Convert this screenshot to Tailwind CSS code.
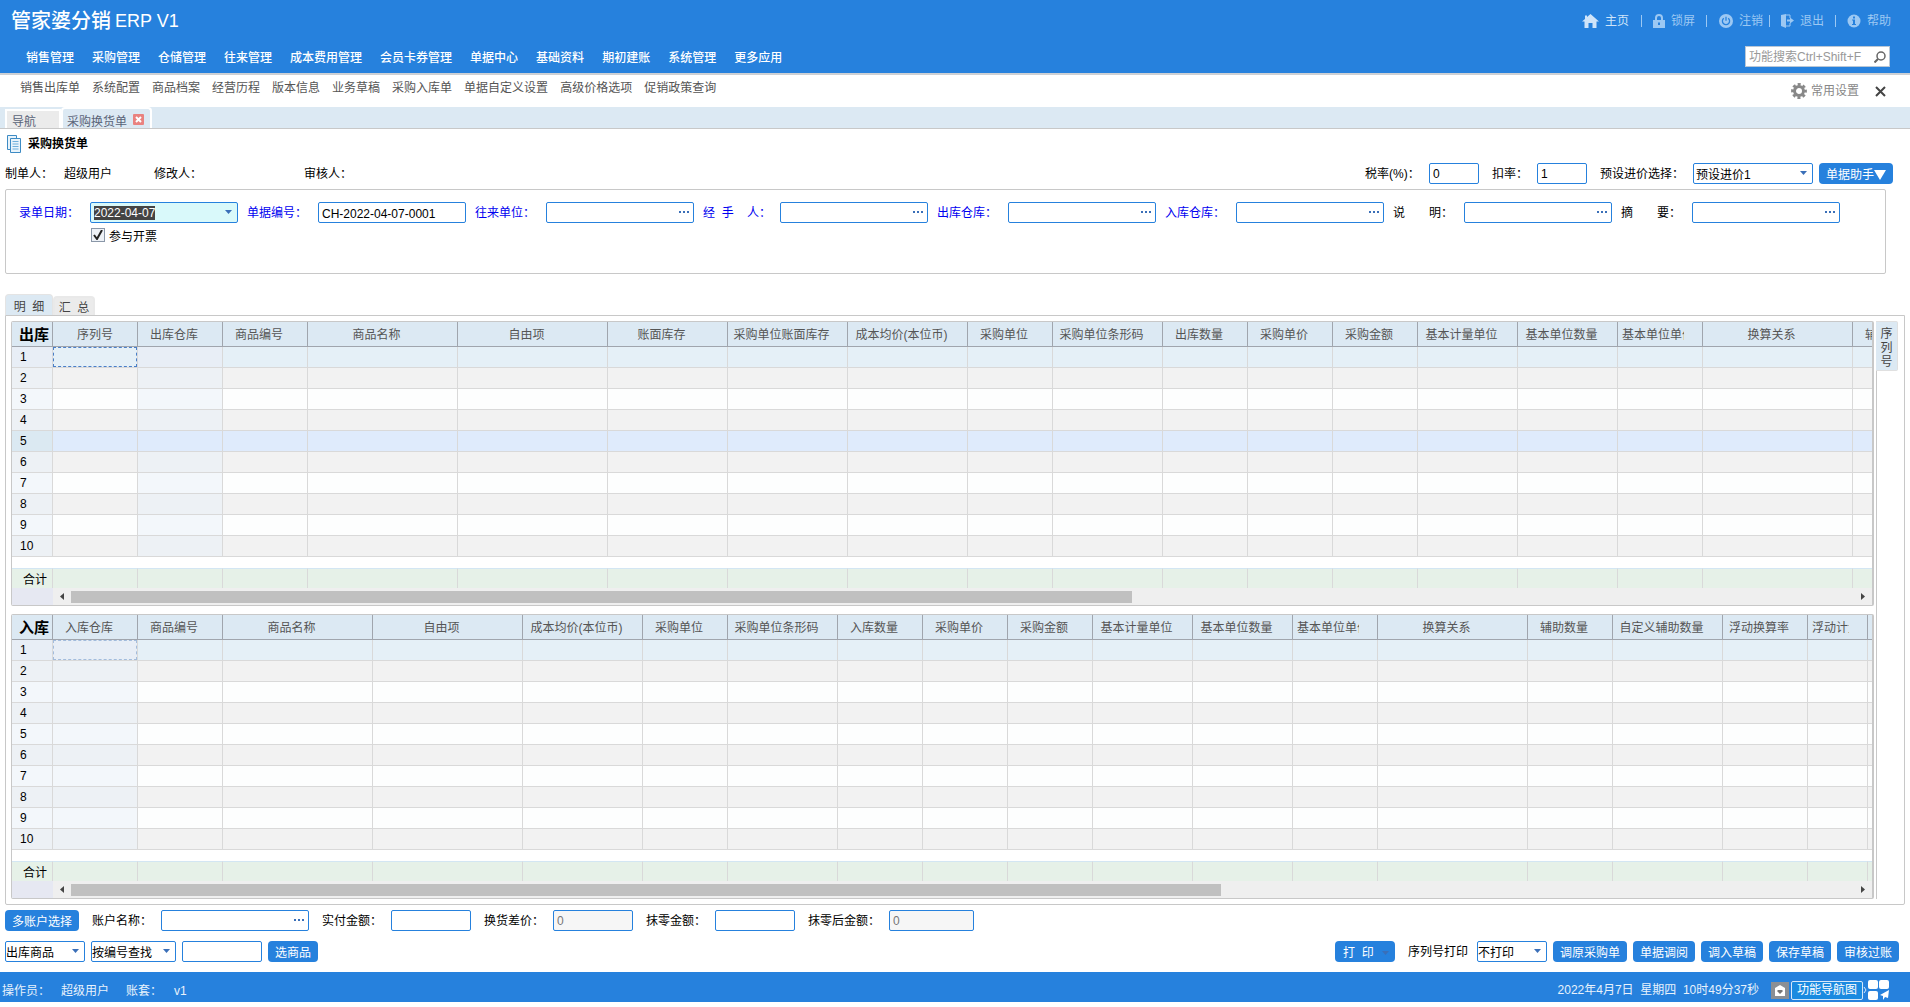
<!DOCTYPE html>
<html lang="zh-CN">
  <head>
    <meta charset="UTF-8" />
    <meta name="viewport" content="width=device-width, initial-scale=1.0" />
    <script src="https://cdn.jsdelivr.net/npm/@tailwindcss/browser@4"></script>
    <title>管家婆分销 ERP V1</title>
  </head>

  <body class="bg-white text-xs text-black font-['Liberation_Sans','Noto_Sans_CJK_SC',sans-serif]">
    <header class="bg-[#2681dd] text-white">
      <div class="flex h-10 items-center justify-between pl-[11px] pr-[19px] pt-0.5">
        <h1 class="flex items-center gap-1 text-lg"><span class="text-xl font-medium">管家婆分销</span>ERP V1</h1>
        <nav class="flex items-center text-[#9cc8f3]">
          <a href="#" class="flex items-center gap-1.5 pr-3 text-[#cfe4f9]">
            <svg class="h-[14px] w-[17px]" viewBox="0 0 17 14" fill="currentColor"><path d="M8.500 0 17 7.500H14.500V14H10.500V9H6.500V14H2.500V7.500H0L3 4.900V1.500H5V3.100z" /></svg>
            主页
          </a>
          <i class="h-3 w-px bg-[#9cc8f3]"></i>
          <a href="#" class="flex items-center gap-1.5 px-[11px]">
            <svg class="h-[14px] w-3" viewBox="0 0 12 14" fill="currentColor"><path fill-rule="evenodd" d="M2 6V4a4 4 0 0 1 8 0v2h2v8H0V6zM4 6h4V4a2 2 0 0 0-4 0zM5 8.500v2.500h2V8.500z" /></svg>
            锁屏
          </a>
          <i class="h-3 w-px bg-[#9cc8f3]"></i>
          <a href="#" class="flex items-center gap-1.5 pl-3 pr-1.5">
            <svg class="h-[14px] w-[14px]" viewBox="0 0 14 14"><circle cx="7" cy="7" r="7" fill="currentColor" /><path d="M4.800 4.200a3.600 3.600 0 1 0 4.400 0M7 2.800v4" fill="none" stroke="#2681dd" stroke-width="1.300" /></svg>
            注销
          </a>
          <i class="h-3 w-px bg-[#9cc8f3]"></i>
          <a href="#" class="flex items-center gap-1.5 px-[11px]">
            <svg class="h-[14px] w-[13px]" viewBox="0 0 13 14" fill="currentColor"><path d="M0 1l5-1v14l-5-2z" /><path d="M5 1h4v3M5 12h4V9" fill="none" stroke="currentColor" /><path d="M6 5.500h3V3.500l4 3-4 3v-2H6z" /></svg>
            退出
          </a>
          <i class="h-3 w-px bg-[#9cc8f3]"></i>
          <a href="#" class="flex items-center gap-1.5 pl-[11px]">
            <svg class="h-[14px] w-[14px]" viewBox="0 0 14 14"><circle cx="7" cy="7" r="6.500" fill="currentColor" /><path d="M6 2.500h2v2H6zM5 5.500h3V10h1v1H5v-1h1V6.500H5z" fill="#2681dd" /></svg>
            帮助
          </a>
        </nav>
      </div>
      <div class="flex h-[33px] items-center justify-between pl-[26px] pr-5">
        <nav id="main-menu" class="flex gap-[18px] pt-0.5 font-medium"></nav>
        <label class="flex h-[21px] w-[145px] items-center border border-[#b9c7d6] bg-white">
          <input type="text" aria-label="功能搜索" placeholder="功能搜索Ctrl+Shift+F" class="w-[120px] min-w-0 pl-[3px] text-xs text-black outline-none placeholder:text-[#999]" />
          <svg class="ml-2 h-3 w-3" viewBox="0 0 12 12" fill="none" stroke="#666"><circle cx="7" cy="5" r="4" stroke-width="1.500" /><path d="M4 8 .5 11.500" stroke-width="2" /></svg>
        </label>
      </div>
    </header>

    <div class="flex h-[34px] justify-between border-t-2 border-[#cdd0d4] pl-5 pr-6 text-[#555]">
      <nav id="quick-menu" class="flex h-[26px] items-center gap-3"></nav>
      <div class="flex items-center text-[#888]">
        <button class="flex items-center gap-1">
          <svg class="h-4 w-4" viewBox="0 0 16 16"><circle cx="8" cy="8" r="4.500" fill="none" stroke="currentColor" stroke-width="3" /><circle cx="8" cy="8" r="6.600" fill="none" stroke="currentColor" stroke-width="2.600" stroke-dasharray="3 2.180" stroke-dashoffset="1.500" /></svg>
          常用设置
        </button>
        <button aria-label="关闭" class="ml-4 text-[#444]">
          <svg class="h-[11px] w-[11px]" viewBox="0 0 11 11" stroke="currentColor" stroke-width="2"><path d="M1 1l9 9M10 1l-9 9" /></svg>
        </button>
      </div>
    </div>

    <div class="flex h-[22px] items-end border-b border-[#c8c8c8] bg-[#dce9f3] pl-[5px] text-[#5a6478]">
      <a href="#" class="h-[19px] w-14 border-2 border-b-0 border-white bg-[#ebebeb] pl-[5px] leading-[22px]">导航</a>
      <a href="#" class="flex h-[21px] w-[91px] items-center gap-1.5 rounded-t border-2 border-b-0 border-white bg-[#dce9f3] pl-1 pt-1.5">
        采购换货单
        <svg class="mb-1 h-[11px] w-[11px]" viewBox="0 0 11 11"><rect width="11" height="11" rx="1" fill="#e9827f" /><path d="M3 3l5 5M8 3l-5 5" stroke="#fff" stroke-width="2" /></svg>
      </a>
    </div>

    <main>
      <h2 class="flex h-7 items-center gap-[7px] pl-[7px] pt-0.5 font-bold">
        <svg class="h-[18px] w-[14px]" viewBox="0 0 14 18" fill="#e9f4fb" stroke="#3d8bc4"><path d="M.5.500h9v14h-9z" /><path d="M3.500 3.500h10v14h-10z" /><path d="M5.500 6.500h6M5.500 9h6M5.500 11.500h6M5.500 14h6" stroke="#6fb0dc" /></svg>
        采购换货单
      </h2>

      <div class="mt-1.5 flex h-[21px] items-center justify-between pl-[5px] pr-[17px]">
        <div class="flex pt-px">
          <span class="w-[59px]">制单人：</span><span class="w-[90px]">超级用户</span>
          <span class="w-[150px]">修改人：</span><span>审核人：</span>
        </div>
        <div class="flex items-center">
          <label for="tax" class="w-16">税率(%)：</label>
          <input id="tax" value="0" class="h-[21px] w-[50px] rounded-xs border border-[#2681dd] px-[3px]" />
          <label for="discount" class="ml-[13px] w-[45px]">扣率：</label>
          <input id="discount" value="1" class="h-[21px] w-[50px] rounded-xs border border-[#2681dd] px-[3px]" />
          <label for="price" class="ml-[13px] w-[93px]">预设进价选择：</label>
          <span class="relative">
            <select id="price" class="block h-[21px] w-[120px] appearance-none rounded-xs border border-[#2681dd] px-0.5 pt-0.5"><option>预设进价1</option></select>
            <svg class="pointer-events-none absolute right-1.5 top-2 h-1 w-[7px]" viewBox="0 0 7 4" fill="#3a6fb8"><path d="M0 0h7L3.500 4z" /></svg>
          </span>
          <button class="ml-1.5 flex h-[21px] w-[74px] items-center justify-center rounded bg-[#2681dd] pt-0.5 text-white">
            单据助手<svg class="h-[10px] w-3" viewBox="0 0 12 10" fill="currentColor"><path d="M0 0h12L6 10z" /></svg>
          </button>
        </div>
      </div>

      <form class="ml-[5px] mr-6 mt-[5px] h-[85px] rounded-xs border border-[#c8c8c8] pl-[13px] pt-3">
        <div id="fields" class="flex items-center gap-[9px] text-[#0000f0]">
          <div class="flex items-center">
            <label for="date" class="w-[71px]">录单日期：</label>
            <span class="relative">
              <input id="date" value="2022-04-07" class="block h-[21px] w-[148px] rounded-xs border border-[#2681dd] bg-[#d9f9fa] px-[3px] text-black outline-none selection:bg-[#444] selection:text-white" />
              <svg class="pointer-events-none absolute right-1.5 top-2 h-1 w-[7px]" viewBox="0 0 7 4" fill="#3a6fb8"><path d="M0 0h7L3.500 4z" /></svg>
            </span>
          </div>
          <div class="flex items-center">
            <label for="code" class="w-[71px]">单据编号：</label>
            <input id="code" value="CH-2022-04-07-0001" class="h-[21px] w-[148px] rounded-xs border border-[#2681dd] px-[3px] pt-0.5 text-black" />
          </div>
        </div>
        <label class="mt-1 flex h-5 items-center gap-1 pl-[72px]">
          <span class="relative mb-1 flex">
            <input type="checkbox" checked class="h-[14px] w-[14px] appearance-none border border-[#8a97a8] bg-[#eef2f7]" />
            <svg class="pointer-events-none absolute left-0.5 top-0.5 h-[10px] w-[10px]" viewBox="0 0 10 10" fill="none" stroke="#222" stroke-width="2"><path d="M1 5l3 4L9 0" /></svg>
          </span>
          参与开票
        </label>
      </form>

      <div class="mt-5 flex h-[21px] items-end pl-[5px] text-[#444]">
        <button class="h-[21px] w-12 whitespace-pre rounded-t border border-b-0 border-[#e4e4e4] bg-[#dce9f3] pt-1">明  细</button>
        <button class="h-[19px] w-[42px] whitespace-pre rounded-t border-2 border-b-0 border-[#e9e9e9] bg-[#ebebeb] pt-0.5">汇  总</button>
      </div>

      <section class="ml-[5px] mr-[5px] flex rounded-b-xs border border-[#c8c8c8] py-[5px] pl-[5px]">
        <div id="grids" class="flex min-w-0 flex-1 flex-col gap-2"></div>
        <aside class="ml-0.5 w-7">
          <button class="flex h-[50px] w-[22px] flex-col items-center justify-center rounded-r-xs border border-l-0 border-[#e0e0e0] bg-[#dce9f3] pt-1 leading-[14px] text-[#444]"><span>序</span><span>列</span><span>号</span></button>
          <div class="h-[528px] border-l border-[#c8c8c8]"></div>
        </aside>
      </section>

      <div class="mt-[5px] flex h-[21px] items-center pl-[5px]">
        <button class="h-[21px] w-[74px] rounded bg-[#2681dd] pt-0.5 text-white">多账户选择</button>
        <label for="account" class="ml-[13px] w-[69px]">账户名称：</label>
        <span class="relative">
          <input id="account" class="block h-[21px] w-[148px] rounded-xs border border-[#2681dd] pl-1 pr-5" />
          <svg class="pointer-events-none absolute right-1 top-[9px] h-0.5 w-[11px]" viewBox="0 0 11 2" fill="#3a6fb8"><path d="M0 0h2v2H0zM4 0h2v2H4zM8 0h2v2H8z" /></svg>
        </span>
        <label for="paid" class="ml-[13px] w-[69px]">实付金额：</label>
        <input id="paid" class="h-[21px] w-20 rounded-xs border border-[#2681dd] px-1" />
        <label for="diff" class="ml-[13px] w-[69px]">换货差价：</label>
        <input id="diff" value="0" readonly class="h-[21px] w-20 rounded-xs border border-[#2681dd] bg-[#f6f6f6] px-[3px] text-[#777]" />
        <label for="round" class="ml-[13px] w-[69px]">抹零金额：</label>
        <input id="round" class="h-[21px] w-20 rounded-xs border border-[#2681dd] px-1" />
        <label for="after" class="ml-[13px] w-[81px]">抹零后金额：</label>
        <input id="after" value="0" readonly class="h-[21px] w-[85px] rounded-xs border border-[#2681dd] bg-[#f6f6f6] px-[3px] text-[#777]" />
      </div>

      <div class="mt-[10px] flex h-[21px] items-center justify-between pl-[5px] pr-[11px]">
        <div class="flex gap-1.5">
          <span class="relative">
            <select aria-label="商品范围" class="block h-[21px] w-20 appearance-none rounded-xs border border-[#2681dd] px-0 pt-0.5"><option>出库商品</option></select>
            <svg class="pointer-events-none absolute right-1.5 top-2 h-1 w-[7px]" viewBox="0 0 7 4" fill="#3a6fb8"><path d="M0 0h7L3.500 4z" /></svg>
          </span>
          <span class="relative">
            <select aria-label="查找方式" class="block h-[21px] w-[85px] appearance-none rounded-xs border border-[#2681dd] px-0 pt-0.5"><option>按编号查找</option></select>
            <svg class="pointer-events-none absolute right-1.5 top-2 h-1 w-[7px]" viewBox="0 0 7 4" fill="#3a6fb8"><path d="M0 0h7L3.500 4z" /></svg>
          </span>
          <input aria-label="查找内容" class="h-[21px] w-20 rounded-xs border border-[#2681dd] px-1" />
          <button class="h-[21px] w-[50px] rounded bg-[#2681dd] pt-0.5 text-white">选商品</button>
        </div>
        <div class="flex items-center gap-1.5">
          <button class="flex h-[21px] w-[60px] items-center gap-2 whitespace-pre rounded bg-[#2681dd] pl-2 pt-0.5 text-white">打  印<svg class="h-1 w-[7px]" viewBox="0 0 7 4" fill="#3a6fb8"><path d="M0 0h7L3.500 4z" /></svg></button>
          <label for="print-sn" class="ml-[7px] mr-[3px] pt-px">序列号打印</label>
          <span class="relative">
            <select id="print-sn" class="block h-[21px] w-[70px] appearance-none rounded-xs border border-[#2681dd] px-0 pt-0.5"><option>不打印</option></select>
            <svg class="pointer-events-none absolute right-1.5 top-2 h-1 w-[7px]" viewBox="0 0 7 4" fill="#3a6fb8"><path d="M0 0h7L3.500 4z" /></svg>
          </span>
          <button class="h-[21px] w-[74px] rounded bg-[#2681dd] pt-0.5 text-white">调原采购单</button>
          <button class="h-[21px] w-[62px] rounded bg-[#2681dd] pt-0.5 text-white">单据调阅</button>
          <button class="h-[21px] w-[62px] rounded bg-[#2681dd] pt-0.5 text-white">调入草稿</button>
          <button class="h-[21px] w-[62px] rounded bg-[#2681dd] pt-0.5 text-white">保存草稿</button>
          <button class="h-[21px] w-[62px] rounded bg-[#2681dd] pt-0.5 text-white">审核过账</button>
        </div>
      </div>
    </main>

    <footer class="mt-[10px] flex h-[30px] items-center justify-between bg-[#2681dd] pl-0.5 pr-[21px] pt-1.5 text-[#e8f2fc]">
      <div class="flex pt-0.5">
        <span class="w-[59px]">操作员：</span><span class="w-[65px]">超级用户</span>
        <span class="w-12">账套：</span><span>v1</span>
      </div>
      <div class="flex items-center">
        <span class="whitespace-pre">2022年4月7日  星期四  10时49分37秒</span>
        <svg class="ml-3 h-[17px] w-[18px]" viewBox="0 0 18 17"><rect width="18" height="17" fill="#8b8f94" /><path d="M4 6l5-3 5 3v8H4z" fill="#fff" /><path d="M9 12L6.500 9.500V8h5v1.500z" fill="#777" /></svg>
        <button class="ml-0.5 h-[19px] w-[72px] rounded-xs border border-[#d5e8fa] bg-[#1a8ae0] text-white">功能导航图</button>
        <svg class="h-5 w-[26px]" viewBox="0 0 26 20" fill="#fff"><path d="M1 7l2 3-2 3" fill="none" stroke="#d5e8fa" /><rect x="5" y="0" width="10" height="9" rx="2" /><rect x="16" y="0" width="10" height="9" rx="2" /><rect x="5" y="11" width="10" height="9" rx="2" /><path d="M26 10l-9 5 3 1v4l2-3 3 1z" /></svg>
      </div>
    </footer>

    <script>
      const mainMenu = ["销售管理", "采购管理", "仓储管理", "往来管理", "成本费用管理", "会员卡券管理", "单据中心", "基础资料", "期初建账", "系统管理", "更多应用"];
      const quickMenu = ["销售出库单", "系统配置", "商品档案", "经营历程", "版本信息", "业务草稿", "采购入库单", "单据自定义设置", "高级价格选项", "促销政策查询"];

      const lookups = [
        { label: "往来单位：", css: "w-[71px]" },
        { label: "经  手    人：", css: "w-[77px]" },
        { label: "出库仓库：", css: "w-[71px]" },
        { label: "入库仓库：", css: "w-[71px]" },
        { label: "说　　明：", css: "w-[71px] text-black" },
        { label: "摘　　要：", css: "w-[71px] text-black" },
      ];

      // [title, width]
      const grids = [
        {
          name: "出库",
          readonlyCol: 1,
          activeRow: 5,
          thumb: 59.5,
          focusCss: "border-[#4a7fc8]",
          cols: [["序列号", 85], ["出库仓库", 85], ["商品编号", 85], ["商品名称", 150], ["自由项", 150], ["账面库存", 120], ["采购单位账面库存", 120], ["成本均价(本位币)", 120], ["采购单位", 85], ["采购单位条形码", 110], ["出库数量", 85], ["采购单价", 85], ["采购金额", 85], ["基本计量单位", 100], ["基本单位数量", 100], ["基本单位单价", 85], ["换算关系", 150], ["辅助数量", 85]],
        },
        {
          name: "入库",
          readonlyCol: 0,
          activeRow: 0,
          thumb: 64.5,
          focusCss: "border-[#a3bcdc]",
          cols: [["入库仓库", 85], ["商品编号", 85], ["商品名称", 150], ["自由项", 150], ["成本均价(本位币)", 120], ["采购单位", 85], ["采购单位条形码", 110], ["入库数量", 85], ["采购单价", 85], ["采购金额", 85], ["基本计量单位", 100], ["基本单位数量", 100], ["基本单位单价", 85], ["换算关系", 150], ["辅助数量", 85], ["自定义辅助数量", 110], ["浮动换算率", 85], ["浮动计量", 60], ["", 85]],
        },
      ];

      const links = (items) => items.map((text) => `<a href="#">${text}</a>`).join("");
      document.getElementById("main-menu").innerHTML = links(mainMenu);
      document.getElementById("quick-menu").innerHTML = links(quickMenu);

      document.getElementById("fields").innerHTML += lookups
        .map((f, i) => `<div class="flex items-center">
            <label for="lookup-${i}" class="whitespace-pre ${f.css}">${f.label}</label>
            <span class="relative">
              <input id="lookup-${i}" class="block h-[21px] w-[148px] rounded-xs border border-[#2681dd] pl-1 pr-5 text-black" />
              <svg class="pointer-events-none absolute right-1 top-[9px] h-0.5 w-[11px]" viewBox="0 0 11 2" fill="#3a6fb8"><path d="M0 0h2v2H0zM4 0h2v2H4zM8 0h2v2H8z" /></svg>
            </span>
          </div>`)
        .join("");

      function rowColors(row, activeRow) {
        if (row === 1) return { line: "bg-[#e5f0f7]", head: "bg-[#e8eef6]", locked: "bg-[#e8eef6]" };
        if (row === activeRow) return { line: "bg-[#dfebfc]", head: "bg-[#dbe9f2]", locked: "bg-[#dfebfc]" };
        if (row % 2) return { line: "bg-[#fdfefe]", head: "bg-[#f3f7fb]", locked: "bg-[#f3f7fb]" };
        return { line: "bg-[#f2f2f2]", head: "bg-[#edf1f5]", locked: "bg-[#edf1f5]" };
      }

      function renderGrid(grid) {
        const total = grid.cols.reduce((sum, c) => sum + c[1], 41);
        const colgroup = grid.cols.map((c) => `<col style="width:${c[1]}px">`).join("");
        const heads = grid.cols
          .map(([title]) => {
            // titles wider than the column are cut off on the right
            const clipped = title === "基本单位单价" || title === "浮动计量";
            const css = clipped ? "mr-[18px] ml-1 text-left" : title === "序列号" ? "" : "mr-3";
            return `<th class="h-[25px] border-b border-r border-[#a0a5ad] p-0 pt-0.5 font-normal"><div class="overflow-hidden whitespace-nowrap ${css}">${title}</div></th>`;
          })
          .join("");
        let rows = "";
        for (let r = 1; r <= 10; r++) {
          const color = rowColors(r, grid.activeRow);
          const cells = grid.cols
            .map((c, i) => {
              const focus = r === 1 && i === 0 ? `<div class="h-5 border border-dashed ${grid.focusCss}"></div>` : "";
              return `<td class="h-[21px] border-b border-r border-[#d9d9d9] p-0 ${i === grid.readonlyCol ? color.locked : ""}">${focus}</td>`;
            })
            .join("");
          rows += `<tr class="${color.line}"><th class="h-[21px] border-b border-r border-[#d9d9d9] p-0 pl-2 text-left font-normal ${color.head}">${r}</th>${cells}</tr>`;
        }
        const sums = grid.cols.map(() => `<td class="border-r border-t border-[#d9d9d9] border-t-[#d3e6f3] p-0"></td>`).join("");
        return `<div class="overflow-hidden rounded-xs border border-r-2 border-[#c8c8c8]">
          <table class="table-fixed border-separate border-spacing-0" style="width:${total}px">
            <colgroup><col style="width:41px">${colgroup}</colgroup>
            <thead><tr class="bg-[#dce9f3] text-[#555]"><th class="h-[25px] border-b border-r border-[#a0a5ad] p-0 pl-1 pt-0.5 text-[15px] leading-5 text-black">${grid.name}</th>${heads}</tr></thead>
            <tbody>${rows}</tbody>
            <tfoot>
              <tr><td class="h-[11px] p-0"></td></tr>
              <tr class="bg-[#e6f1e8]"><th class="h-5 border-r border-t border-[#d9d9d9] border-t-[#d3e6f3] p-0 pr-[5px] pt-0.5 text-right font-normal">合计</th>${sums}</tr>
            </tfoot>
          </table>
          <div class="flex h-[17px] items-center bg-[#efefef]">
            <div class="h-full w-[41px] bg-[#e6e8f2]"></div>
            <svg class="mx-[7px] h-[7px] w-1" viewBox="0 0 4 7" fill="#444"><path d="M4 0v7L0 3.500z" /></svg>
            <div class="flex-1"><div class="h-3 bg-[#c0c0c0]" style="width:${grid.thumb}%"></div></div>
            <svg class="mx-[7px] h-[7px] w-1" viewBox="0 0 4 7" fill="#444"><path d="M0 0v7l4-3.500z" /></svg>
          </div>
        </div>`;
      }
      document.getElementById("grids").innerHTML = grids.map(renderGrid).join("");

      document.getElementById("date").select();
    </script>
  </body>
</html>
